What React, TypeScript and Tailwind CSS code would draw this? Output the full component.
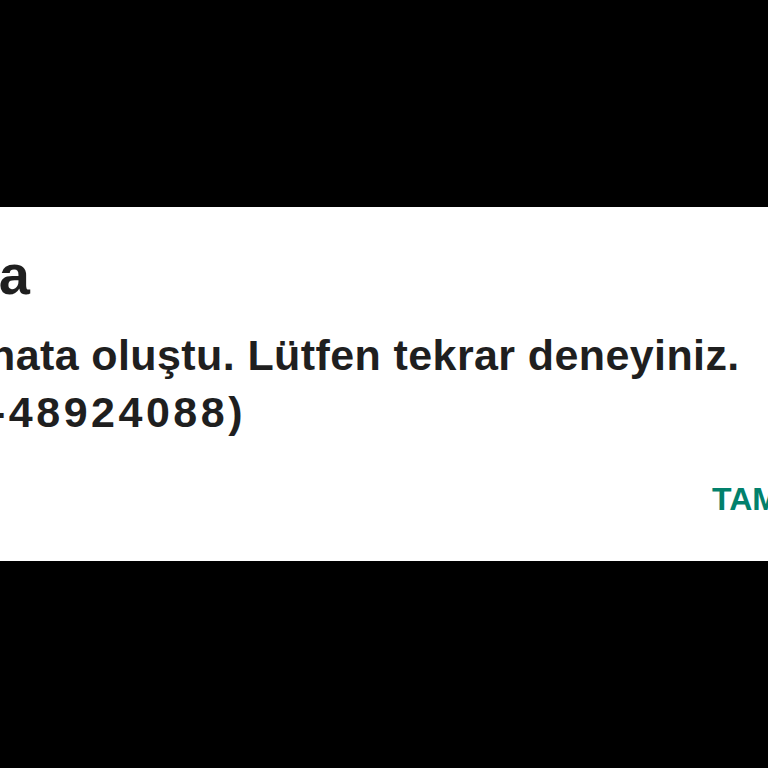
export default function App() {
  return (
    <div className="flex h-screen w-full flex-col overflow-hidden bg-black">
      <div className="h-[207px] shrink-0" />
      <div className="h-[354px] w-full shrink-0 overflow-hidden bg-white pt-[40px] text-[#1f1f1f] whitespace-nowrap font-['Liberation_Sans',Arial,sans-serif]">
        <h2 className="-ml-[20px] text-[56px] font-bold leading-[56px]">ta</h2>
        <div className="-ml-[11px] mt-[24px] text-[43px] font-bold leading-[57px]">
          <p className="tracking-[0.4px]">hata oluştu. Lütfen tekrar deneyiniz.</p>
          <p className="pl-[2px] tracking-[3.5px]">-48924088)</p>
        </div>
        <div className="mt-[42px] pl-[712px]">
          <button className="text-[32px] font-bold uppercase leading-[32px] text-[#02816c]">
            Tamam
          </button>
        </div>
      </div>
    </div>
  );
}
